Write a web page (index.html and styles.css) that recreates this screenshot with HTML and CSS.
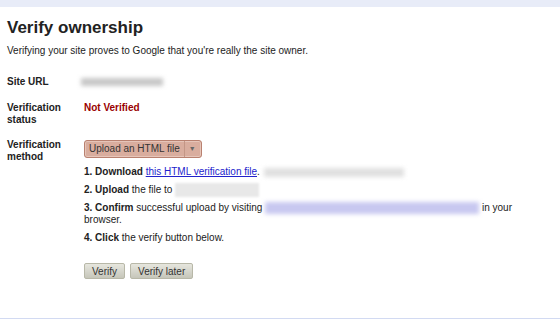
FILE: index.html
```html
<!DOCTYPE html>
<html lang="en">
<head>
<meta charset="UTF-8" />
<title>Verify ownership</title>
<link rel="stylesheet" href="styles.css">
</head>
<body>

<div class="topbar"></div>

<div class="page">
    <h1>Verify ownership</h1>
    <p class="intro">Verifying your site proves to Google that you're really the site owner.</p>

    <div class="row row-url">
        <div class="label">Site URL</div>
        <div class="value"><span class="blur blur-url"></span></div>
    </div>

    <div class="row">
        <div class="label">Verification status</div>
        <div class="value status">Not Verified</div>
    </div>

    <div class="row">
        <div class="label">Verification method</div>
        <div class="value">
            <div class="select">
                <span class="select-text">Upload an HTML file</span>
                <span class="select-arrow">&#9660;</span>
            </div>

            <ol class="steps">
                <li><b>1. Download</b> <a href="#">this HTML verification file</a>.<span class="blur blur-file"></span></li>
                <li><b>2. Upload</b> the file to <span class="blur blur-site"></span></li>
                <li><b>3. Confirm</b> successful upload by visiting <span class="blur blur-link"></span> in your browser.</li>
                <li><b>4. Click</b> the verify button below.</li>
            </ol>

            <div class="buttons">
                <button>Verify</button>
                <button>Verify later</button>
            </div>
        </div>
    </div>
</div>

<div class="bottombar"></div>

</body>
</html>
```

FILE: styles.css
```css
body {
    font-family: "Liberation Sans", Arial, sans-serif;
    font-size: 10px;
    color: #222;
    background: #fff;
    margin: 0;
    padding: 0;
}

.topbar {
    height: 7px;
    background: #e8ecf8;
}

.page {
    padding: 10px 7px 0 7px;
    height: 311px;
    box-sizing: border-box;
}

h1 {
    font-size: 17px;
    margin: 0;
    line-height: 22px;
}

.intro {
    margin: 6px 0 19px 0;
    line-height: 12px;
}

.row {
    display: flex;
    margin-bottom: 13px;
}

.row-url {
    margin-bottom: 14px;
}

.label {
    width: 77px;
    font-weight: bold;
    line-height: 12px;
    flex-shrink: 0;
}

.value {
    line-height: 12px;
}

.status {
    color: #990000;
    font-weight: bold;
}

.blur {
    display: inline-block;
    vertical-align: middle;
    filter: blur(2px);
}

.blur-url {
    width: 82px;
    height: 8px;
    margin-left: -3px;
    background: #c8c8c8;
}

.select {
    display: inline-flex;
    align-items: center;
    height: 16px;
    border: 1px solid #b98170;
    border-radius: 3px;
    background: #d9ad9e;
    margin-top: 1px;
    box-shadow: inset 0 0 0 1px #e6c5b9;
}

.select-text {
    padding: 0 4px;
    color: #333;
    border-right: 1px solid #c39686;
    line-height: 16px;
}

.select-arrow {
    font-size: 7px;
    color: #666;
    padding: 0 5px 0 4px;
}

.steps {
    list-style: none;
    margin: 8px 0 0 0;
    padding: 0;
    width: 432px;
}

.steps li {
    margin-bottom: 6px;
}

.steps a {
    color: #2222cc;
}

.blur-file {
    width: 140px;
    height: 9px;
    margin-left: 4px;
    background: #e0e0e0;
}

.blur-site {
    width: 84px;
    height: 14px;
    margin: -3px 0;
    background: #e8e8e8;
    filter: blur(1px);
}

.blur-link {
    width: 214px;
    height: 12px;
    margin: -2px 0;
    background: #c8c8f0;
}

.buttons {
    margin-top: 19px;
    display: flex;
    gap: 5px;
}

button {
    font-family: "Liberation Sans", Arial, sans-serif;
    font-size: 10px;
    color: #333;
    height: 16px;
    padding: 0 7px;
    border: 1px solid #b8b8a8;
    border-radius: 2px;
    background: linear-gradient(#e6e6de, #c6c6ba);
}

.bottombar {
    border-top: 1px solid #d2daf2;
}
```
